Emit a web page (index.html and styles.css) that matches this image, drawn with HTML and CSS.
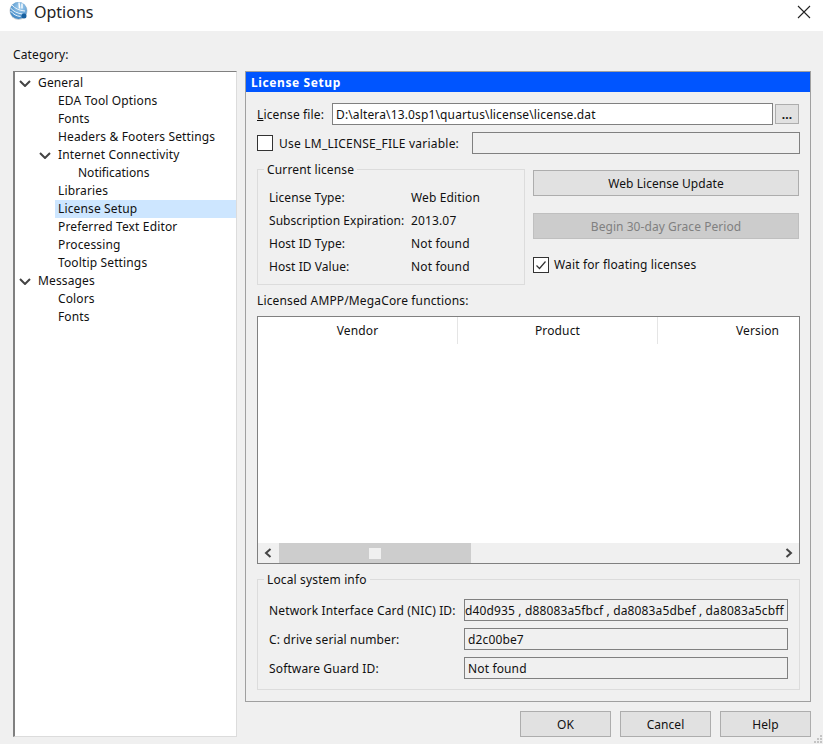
FILE: index.html
```html
<!DOCTYPE html>
<html lang="en">
<head>
    <meta charset="UTF-8">
    <title>Options</title>
    <link rel="stylesheet" href="styles.css">
</head>
<body>

<div class="titlebar">
    <svg class="logo" width="20" height="22" viewBox="0 0 20 22">
        <defs>
            <radialGradient id="globe" cx="0.6" cy="0.3" r="0.85">
                <stop offset="0" stop-color="#a8d2f0"/>
                <stop offset="1" stop-color="#2a78bd"/>
            </radialGradient>
        </defs>
        <circle cx="9.500" cy="10" r="9" fill="#c9ced3"/>
        <circle cx="9.500" cy="9.500" r="8.500" fill="url(#globe)"/>
        <path d="M1.500 7c3 3.500 7 5.500 12 6M1.500 10c3 3.500 6 5 10 5.500M3 4c3 3.500 7 5.500 13 6" fill="none" stroke="#eaf4fc" stroke-width="1"/>
        <path d="M10 1.500l.5 6M13 2.500l0 5" stroke="#fff" stroke-width="1.400"/>
        <circle cx="15" cy="15" r="2.500" fill="#17609f"/>
    </svg>
    <span class="title">Options</span>
    <svg class="close" width="14" height="14" viewBox="0 0 14 14">
        <path d="M1 1l12 12M13 1L1 13" stroke="#222" stroke-width="1.100" fill="none"/>
    </svg>
</div>

<div class="content">
    <div class="category-label">Category:</div>
    <div class="columns">
        <div class="tree">
            <div class="node lvl0"><svg class="chev" width="12" height="7" viewBox="0 0 12 7"><path d="M1 1l5 5 5-5" fill="none" stroke="#444" stroke-width="2"/></svg>General</div>
            <div class="node lvl1">EDA Tool Options</div>
            <div class="node lvl1">Fonts</div>
            <div class="node lvl1">Headers &amp; Footers Settings</div>
            <div class="node lvl1"><svg class="chev" width="12" height="7" viewBox="0 0 12 7"><path d="M1 1l5 5 5-5" fill="none" stroke="#444" stroke-width="2"/></svg>Internet Connectivity</div>
            <div class="node lvl2">Notifications</div>
            <div class="node lvl1">Libraries</div>
            <div class="node lvl1"><span class="selected">License Setup</span></div>
            <div class="node lvl1">Preferred Text Editor</div>
            <div class="node lvl1">Processing</div>
            <div class="node lvl1">Tooltip Settings</div>
            <div class="node lvl0"><svg class="chev" width="12" height="7" viewBox="0 0 12 7"><path d="M1 1l5 5 5-5" fill="none" stroke="#444" stroke-width="2"/></svg>Messages</div>
            <div class="node lvl1">Colors</div>
            <div class="node lvl1">Fonts</div>
        </div>

        <div class="right">
            <div class="panel">
                <div class="panel-head">License Setup</div>
                <div class="panel-body">
                    <div class="file-row">
                        <span class="file-label"><u>L</u>icense file:</span>
                        <div class="input file-input">D:\altera\13.0sp1\quartus\license\license.dat</div>
                        <button class="btn dots">...</button>
                    </div>
                    <div class="lm-row">
                        <span class="check"></span>
                        <span class="lm-label">Use LM_LICENSE_FILE variable:</span>
                        <div class="input lm-input"></div>
                    </div>

                    <div class="license-row">
                        <fieldset class="group current">
                            <legend>Current license</legend>
                            <div class="info"><span class="info-key">License Type:</span><span>Web Edition</span></div>
                            <div class="info"><span class="info-key">Subscription Expiration:</span><span>2013.07</span></div>
                            <div class="info"><span class="info-key">Host ID Type:</span><span>Not found</span></div>
                            <div class="info"><span class="info-key">Host ID Value:</span><span>Not found</span></div>
                        </fieldset>
                        <div class="license-actions">
                            <button class="btn wide">Web License Update</button>
                            <button class="btn wide disabled">Begin 30-day Grace Period</button>
                            <div class="wait-row">
                                <span class="check"><svg width="14" height="14" viewBox="0 0 14 14"><path d="M2.500 7.500l3 3 6-7" fill="none" stroke="#333" stroke-width="1.200"/></svg></span>
                                <span>Wait for floating licenses</span>
                            </div>
                        </div>
                    </div>

                    <div class="functions-label">Licensed AMPP/MegaCore functions:</div>
                    <div class="table">
                        <div class="table-head">
                            <div class="th">Vendor</div>
                            <div class="th">Product</div>
                            <div class="th last">Version</div>
                        </div>
                        <div class="table-body"></div>
                        <div class="scrollbar">
                            <svg class="arrow" width="8" height="10" viewBox="0 0 8 10"><path d="M6.500 1L2 5l4.500 4" fill="none" stroke="#444" stroke-width="2"/></svg>
                            <div class="track"><div class="thumb"><span class="grip"></span></div></div>
                            <svg class="arrow" width="8" height="10" viewBox="0 0 8 10"><path d="M1.500 1L6 5 1.500 9" fill="none" stroke="#444" stroke-width="2"/></svg>
                        </div>
                    </div>

                    <fieldset class="group system">
                        <legend>Local system info</legend>
                        <div class="sys-row"><span class="sys-key">Network Interface Card (NIC) ID:</span><div class="input sys-input nic">d40d935 , d88083a5fbcf , da8083a5dbef , da8083a5cbff</div></div>
                        <div class="sys-row"><span class="sys-key">C: drive serial number:</span><div class="input sys-input">d2c00be7</div></div>
                        <div class="sys-row"><span class="sys-key">Software Guard ID:</span><div class="input sys-input">Not found</div></div>
                    </fieldset>
                </div>
            </div>
            <div class="footer">
                <button class="btn footer-btn">OK</button>
                <button class="btn footer-btn">Cancel</button>
                <button class="btn footer-btn">Help</button>
            </div>
        </div>
    </div>
</div>

<svg class="grip-corner" width="10" height="10" viewBox="0 0 10 10">
    <path d="M7 1h2v2H7zM4 4h2v2H4zM7 4h2v2H7zM1 7h2v2H1zM4 7h2v2H4zM7 7h2v2H7z" fill="#c4c4c4"/>
</svg>

</body>
</html>
```

FILE: styles.css
```css
* {
    margin: 0;
    padding: 0;
    box-sizing: border-box;
}

html, body {
    width: 823px;
    height: 744px;
    overflow: hidden;
}

body {
    position: relative;
    background: #f0f0f0;
    font-family: "Noto Sans", "Open Sans", Arial, sans-serif;
    font-size: 12px;
    letter-spacing: 0.14px;
    color: #111;
}

.titlebar {
    display: flex;
    align-items: center;
    height: 31px;
    padding-left: 9px;
    padding-bottom: 7px;
    background: #fff;
}

.logo {
    flex: none;
}

.title {
    margin-left: 5px;
    font-size: 16px;
    letter-spacing: 0;
    color: #222;
}

.close {
    margin-left: auto;
    margin-right: 12px;
}

.content {
    padding: 16px 12px 0 13px;
}

.category-label {
    height: 16px;
    line-height: 16px;
}

.columns {
    display: flex;
    gap: 8px;
    margin-top: 8px;
}

.tree {
    width: 224px;
    height: 666px;
    padding-top: 2px;
    background: #fff;
    border-top: 1px solid #808080;
    border-left: 2px solid #808080;
    border-right: 1px solid #dcdcdc;
    border-bottom: 1px solid #dcdcdc;
}

.node {
    position: relative;
    display: flex;
    height: 18px;
    line-height: 18px;
    white-space: nowrap;
}

.lvl0 { padding-left: 23px; }
.lvl1 { padding-left: 43px; }
.lvl2 { padding-left: 63px; letter-spacing: 0; }

.chev {
    position: absolute;
    top: 6px;
    margin-left: -19px;
}

.selected {
    display: block;
    flex: 1;
    margin-left: -3px;
    padding-left: 3px;
    background: #cde6ff;
}

.right {
    width: 566px;
}

.panel {
    height: 631px;
    border: 1px solid #a0a0a0;
}

.panel-head {
    height: 20px;
    padding: 1px 0 0 5px;
    line-height: 20px;
    font-weight: bold;
    letter-spacing: 0.6px;
    color: #fff;
    background: #0055ff;
}

.panel-body {
    padding: 11px 10px 0 11px;
}

.input {
    height: 22px;
    line-height: 20px;
    padding: 1px 0 0 3px;
    white-space: nowrap;
    overflow: hidden;
    border: 1px solid #808080;
    background: #fff;
}

.btn {
    font-family: inherit;
    font-size: 12px;
    letter-spacing: 0.05px;
    color: #111;
    background: #e1e1e1;
    border: 1px solid #adadad;
}

.file-row {
    display: flex;
    align-items: center;
    height: 22px;
}

.file-label {
    width: 75px;
}

.file-input {
    width: 441px;
}

.dots {
    width: 24px;
    height: 20px;
    margin-left: 2px;
    font-weight: bold;
}

.lm-row {
    display: flex;
    align-items: center;
    height: 22px;
    margin-top: 7px;
}

.check {
    display: flex;
    align-items: center;
    justify-content: center;
    flex: none;
    width: 16px;
    height: 16px;
    background: #fff;
    border: 1px solid #333;
}

.lm-label {
    width: 193px;
    margin-left: 6px;
    letter-spacing: 0.22px;
}

.lm-input {
    width: 328px;
    background: #f0f0f0;
}

.license-row {
    display: flex;
    margin-top: 7px;
}

.group {
    position: relative;
    border: 1px solid #dcdcdc;
}

.group legend {
    margin-left: -5px;
    padding: 1px 3px 0 3px;
    line-height: 16px;
}

.current {
    width: 268px;
    height: 124px;
    padding: 8px 0 0 11px;
}

.info {
    display: flex;
    height: 23px;
    line-height: 23px;
    white-space: nowrap;
}

.info-key {
    width: 142px;
    letter-spacing: 0.06px;
}

.license-actions {
    width: 266px;
    margin-left: 8px;
    padding-top: 9px;
}

.wide {
    display: block;
    width: 266px;
    height: 26px;
    margin-bottom: 17px;
}

.disabled {
    color: #808080;
    background: #cccccc;
    border-color: #bfbfbf;
}

.wait-row {
    display: flex;
    align-items: center;
    gap: 5px;
    margin-top: 1px;
    line-height: 18px;
}

.functions-label {
    height: 16px;
    margin-top: 8px;
    line-height: 16px;
}

.table {
    display: flex;
    flex-direction: column;
    width: 543px;
    height: 248px;
    margin-top: 7px;
    background: #fff;
    border: 1px solid #808080;
}

.table-head {
    display: flex;
    height: 27px;
}

.th {
    width: 200px;
    line-height: 27px;
    text-align: center;
    border-right: 1px solid #e5e5e5;
}

.th.last {
    flex: 1;
    border-right: 0;
    padding-left: 58px;
}

.table-body {
    flex: 1;
}

.scrollbar {
    display: flex;
    align-items: center;
    justify-content: space-between;
    height: 20px;
    padding: 0 6px 0 6px;
    background: #f0f0f0;
}

.track {
    flex: 1;
    height: 20px;
    margin-left: 7px;
}

.thumb {
    display: flex;
    align-items: center;
    justify-content: center;
    width: 192px;
    height: 100%;
    background: #cdcdcd;
}

.grip {
    display: block;
    width: 12px;
    height: 11px;
    background: #f0f0f0;
}

.system {
    width: 543px;
    height: 119px;
    margin-top: 7px;
    padding: 11px 0 0 11px;
}

.sys-row {
    display: flex;
    align-items: center;
    height: 22px;
    margin-bottom: 7px;
}

.sys-key {
    width: 195px;
    white-space: nowrap;
}

.sys-input {
    width: 324px;
    background: #f0f0f0;
}

.nic {
    padding-left: 0;
}

.footer {
    display: flex;
    justify-content: flex-end;
    gap: 9px;
    margin-top: 9px;
}

.footer-btn {
    width: 91px;
    height: 26px;
}

.grip-corner {
    position: absolute;
    right: 0;
    bottom: 0;
}
```
